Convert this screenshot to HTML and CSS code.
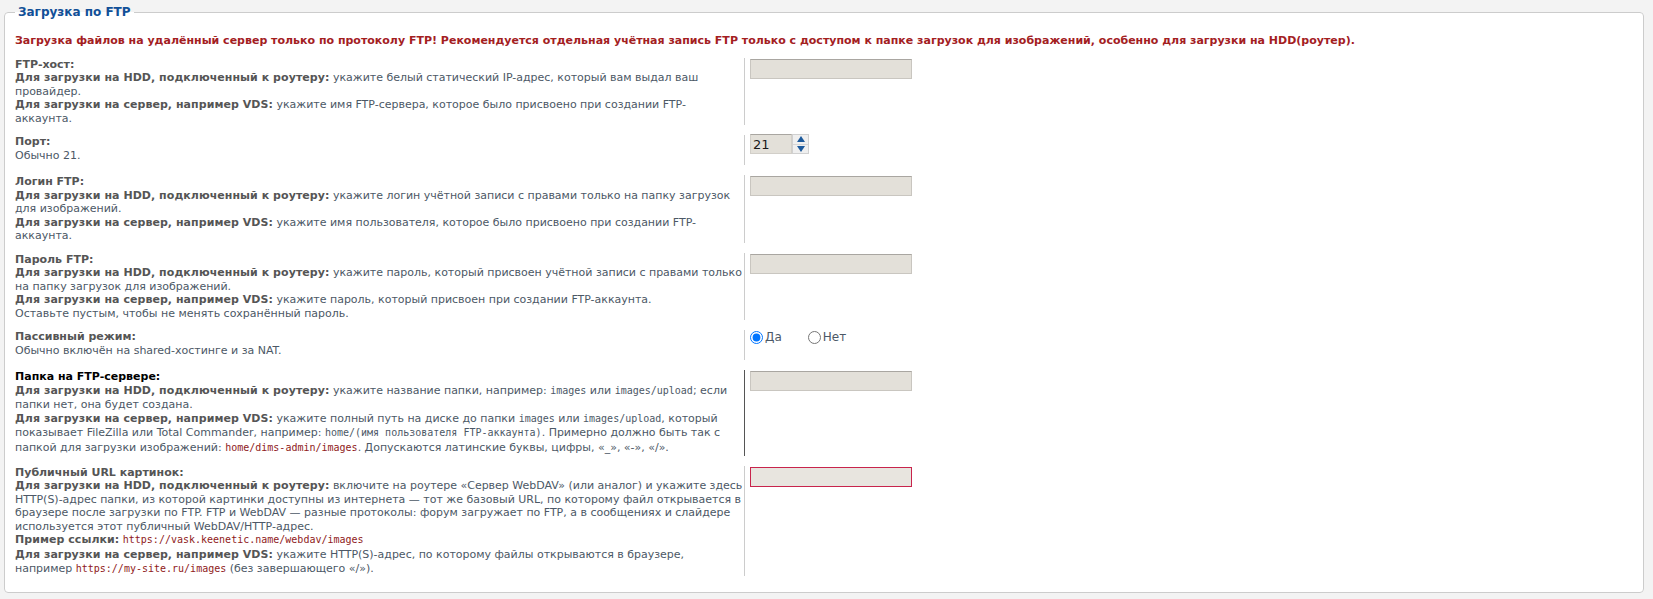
FILE: index.html
```html
<!DOCTYPE html>
<html lang="ru">
<head>
<meta charset="utf-8">
<title>Загрузка по FTP</title>
<link rel="stylesheet" href="styles.css">
</head>
<body>
<fieldset class="ftp-panel">
  <legend>Загрузка по FTP</legend>
  <p class="notice">Загрузка файлов на удалённый сервер только по протоколу FTP! Рекомендуется отдельная учётная запись FTP только с доступом к папке загрузок для изображений, особенно для загрузки на HDD(роутер).</p>

  <dl class="opt">
    <dt>
      <label class="opt-label">FTP-хост:</label>
      <span class="explain"><b>Для загрузки на HDD, подключенный к роутеру:</b> укажите белый статический IP-адрес, который вам выдал ваш провайдер.<br><b>Для загрузки на сервер, например VDS:</b> укажите имя FTP-сервера, которое было присвоено при создании FTP-аккаунта.</span>
    </dt>
    <dd><input class="inputbox" type="text"></dd>
  </dl>

  <dl class="opt opt-compact">
    <dt>
      <label class="opt-label">Порт:</label>
      <span class="explain">Обычно 21.</span>
    </dt>
    <dd>
      <span class="spin">
        <span class="spin-value">21</span>
        <span class="spin-btns">
          <span class="spin-btn"><svg width="8" height="6" viewBox="0 0 8 6"><path d="M4 0 L8 6 H0 Z" fill="#1d5a9c"/></svg></span>
          <span class="spin-btn"><svg width="8" height="6" viewBox="0 0 8 6"><path d="M0 0 H8 L4 6 Z" fill="#1d5a9c"/></svg></span>
        </span>
      </span>
    </dd>
  </dl>

  <dl class="opt">
    <dt>
      <label class="opt-label">Логин FTP:</label>
      <span class="explain"><b>Для загрузки на HDD, подключенный к роутеру:</b> укажите логин учётной записи с правами только на папку загрузок для изображений.<br><b>Для загрузки на сервер, например VDS:</b> укажите имя пользователя, которое было присвоено при создании FTP-аккаунта.</span>
    </dt>
    <dd><input class="inputbox" type="text"></dd>
  </dl>

  <dl class="opt">
    <dt>
      <label class="opt-label">Пароль FTP:</label>
      <span class="explain"><b>Для загрузки на HDD, подключенный к роутеру:</b> укажите пароль, который присвоен учётной записи с правами только на папку загрузок для изображений.<br><b>Для загрузки на сервер, например VDS:</b> укажите пароль, который присвоен при создании FTP-аккаунта.<br>Оставьте пустым, чтобы не менять сохранённый пароль.</span>
    </dt>
    <dd><input class="inputbox" type="password"></dd>
  </dl>

  <dl class="opt opt-compact">
    <dt>
      <label class="opt-label">Пассивный режим:</label>
      <span class="explain">Обычно включён на shared-хостинге и за NAT.</span>
    </dt>
    <dd class="radios">
      <label class="radio"><input type="radio" name="passive" checked> Да</label>
      <label class="radio"><input type="radio" name="passive"> Нет</label>
    </dd>
  </dl>

  <dl class="opt is-hover">
    <dt>
      <label class="opt-label">Папка на FTP-сервере:</label>
      <span class="explain"><b>Для загрузки на HDD, подключенный к роутеру:</b> укажите название папки, например: <code>images</code> или <code>images/upload</code>; если папки нет, она будет создана.<br><b>Для загрузки на сервер, например VDS:</b> укажите полный путь на диске до папки <code>images</code> или <code>images/upload</code>, который показывает FileZilla или Total Commander, например: <code>home/(имя пользователя FTP-аккаунта)</code>. Примерно должно быть так с папкой для загрузки изображений: <code class="path">home/dims-admin/images</code>. Допускаются латинские буквы, цифры, «_», «-», «/».</span>
    </dt>
    <dd><input class="inputbox" type="text"></dd>
  </dl>

  <dl class="opt">
    <dt>
      <label class="opt-label">Публичный URL картинок:</label>
      <span class="explain"><b>Для загрузки на HDD, подключенный к роутеру:</b> включите на роутере «Сервер WebDAV» (или аналог) и укажите здесь HTTP(S)-адрес папки, из которой картинки доступны из интернета — тот же базовый URL, по которому файл открывается в браузере после загрузки по FTP. FTP и WebDAV — разные протоколы: форум загружает по FTP, а в сообщениях и слайдере используется этот публичный WebDAV/HTTP-адрес.<br><b>Пример ссылки:</b> <code class="path">https://vask.keenetic.name/webdav/images</code><br><b>Для загрузки на сервер, например VDS:</b> укажите HTTP(S)-адрес, по которому файлы открываются в браузере, например <code class="path">https://my-site.ru/images</code> (без завершающего «/»).</span>
    </dt>
    <dd><input class="inputbox is-invalid" type="text"></dd>
  </dl>
</fieldset>
</body>
</html>
```

FILE: styles.css
```css
html, body {
  background: #f3f3f3;
}

body {
  margin: 0;
  padding: 5px 9px 8px 4px;
  font-family: "DejaVu Sans", Verdana, sans-serif;
  font-size: 11px;
  line-height: 13.5px;
  color: #4c5866;
}

.ftp-panel {
  margin: 0;
  padding: 0 10px 6px;
  background: #fff;
  border: 1px solid #ccc;
  border-radius: 4px;
}

.ftp-panel legend {
  padding: 0 3px;
  margin-left: 0;
  font-size: 12px;
  line-height: 15px;
  font-weight: bold;
  color: #115098;
}

.notice {
  margin: 14px 0 10px;
  font-weight: bold;
  color: #a3201f;
}

/* option row: description on the left, control on the right */
.opt {
  display: flex;
  margin: 0 0 10px;
}

.opt dt {
  flex: 0 0 730px;
  box-sizing: border-box;
  padding-right: 1.4px;
  border-right: 1px solid #ccc;
}

.opt dd {
  flex: 1;
  margin: 0;
  padding-left: 5px;
}

.opt-compact dd {
  min-height: 30px;
}

.opt-label {
  display: block;
  font-weight: bold;
  color: #555;
}

.explain {
  display: block;
  color: #4c5866;
  letter-spacing: -0.01px;
}

.explain b {
  color: #555;
  letter-spacing: 0.05px;
}

.is-hover dt {
  border-right-color: #555;
}

.is-hover .opt-label {
  color: #000;
}

code {
  font-family: "DejaVu Sans Mono", "Liberation Mono", monospace;
  font-size: 10px;
  line-height: 14.7px;
  letter-spacing: 0;
  color: #4c5866;
}

code.path {
  color: #8f1a1a;
}

/* text fields */
.inputbox {
  display: block;
  box-sizing: border-box;
  width: 162px;
  height: 20px;
  margin: 1px 0 0;
  padding: 2px 3px;
  font: 11px "DejaVu Sans", sans-serif;
  background: #e3e0d9;
  border: 1px solid #c9c6c0;
  border-top-color: #a9a6a1;
  border-radius: 0;
  outline: none;
}

.inputbox.is-invalid {
  background: #e8e5df;
  border-color: #c8244c;
}

/* numeric field with stepper */
.spin {
  display: inline-flex;
  height: 20px;
  margin-top: -1px;
}

.spin-value {
  box-sizing: border-box;
  width: 42px;
  height: 20px;
  padding: 0 2px;
  font-size: 13px;
  line-height: 20px;
  color: #1a1a1a;
  background: #e3e0d9;
  border: 1px solid #d2cfc9;
  border-top-color: #a9a6a1;
}

.spin-btns {
  display: flex;
  flex-direction: column;
  width: 17px;
  height: 20px;
  border: 1px solid #d0d0d0;
  box-sizing: border-box;
  background: #efefef;
}

.spin-btn {
  flex: 1;
  display: flex;
  align-items: center;
  justify-content: center;
}

.spin-btn + .spin-btn {
  border-top: 1px solid #d6d6d6;
}

/* radio pair */
.radios {
  display: flex;
  align-items: flex-start;
}

.radio {
  display: inline-flex;
  align-items: center;
  font-size: 12px;
  line-height: 14px;
  color: #4c5866;
  margin-right: 26px;
}

.radio input {
  width: 13px;
  height: 13px;
  margin: 0 2px 0 0;
}
```
